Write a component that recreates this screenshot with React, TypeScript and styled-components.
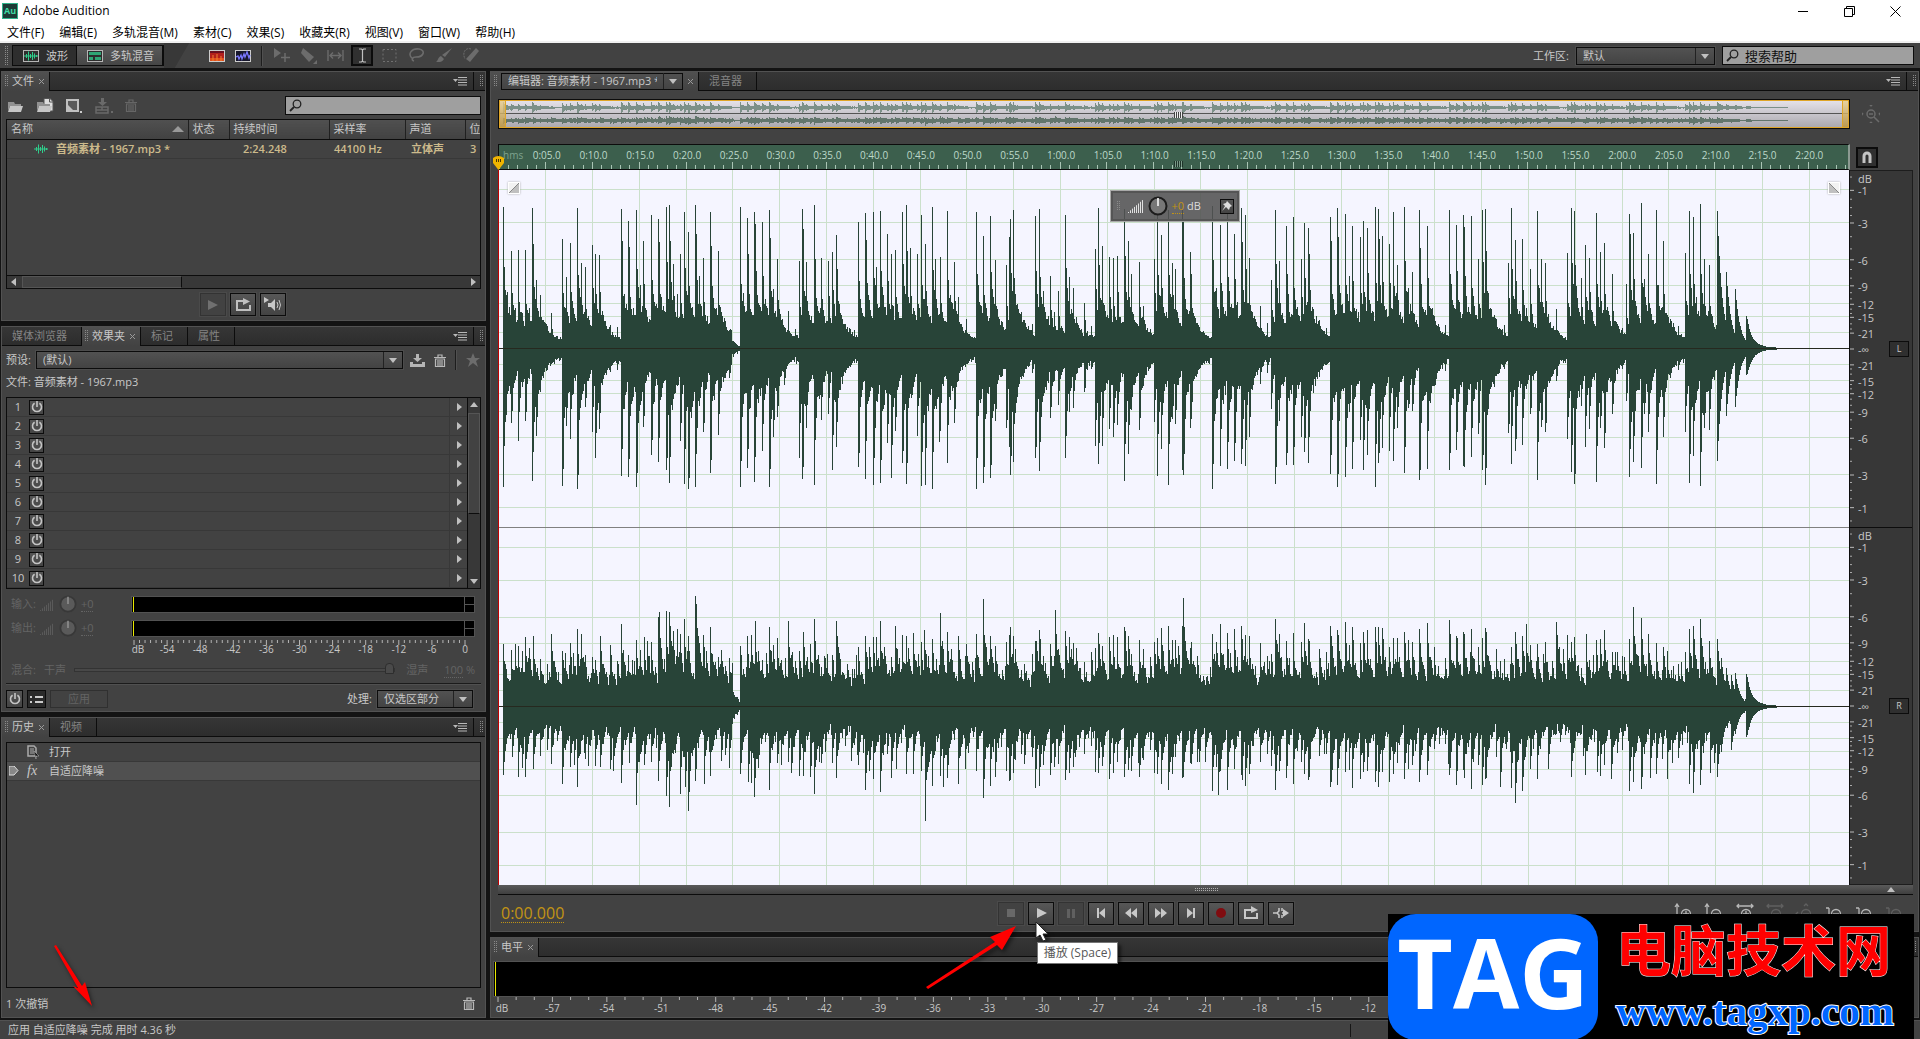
import React from "react";
import styled, { createGlobalStyle, css } from "styled-components";

const ui = '"Open Sans", "Noto Sans CJK SC", sans-serif';
const c = {
  panel: "#424242",
  edge: "#525252",
  gap: "#131313",
  line: "#0c0c0c",
  text: "#c8c8c8",
  dim: "#646464",
  tab: "#848484",
  amber: "#c29414",
  tan: "#ccba8c",
  wave: "#284438",
  canvas: "#f5f5ff",
  grid: "#cbe0cb",
};

const Global = createGlobalStyle`
  * { box-sizing: border-box; }
  html, body, #root { height: 100%; }
  body { margin: 0; background: ${c.gap}; overflow: hidden; }
  button, input, select { font: inherit; color: inherit; margin: 0; }
  svg { display: block; flex: none; }
`;

/* ---------- wave data ---------- */

type Survey = { origin: number; zero: number; unit: number; points: number[] };

const LEFT_UP: Survey[] = [
  { origin: -13, zero: 865, unit: 3, points: [52,443,64,697,76,573,88,745,97,570,118,572,130,745,139,446,142,552,151,662,163,705,172,780,196,760,229,538,241,652,253,549,274,445,286,610,298,622,319,556,328,583,340,586,373,797,394,802,406,447,409,543,427,484,430,562,451,451,463,675,472,543,496,465,505,727,517,478,520,547,541,441,550,437,553,543,562,612,574,702,583,583,595,457,607,518,628,435,631,522,640,650,652,594,673,457,676,560,697,573,715,775,763,442,784,474,787,583,805,458,808,492,829,486,850,450,853,535,862,687,874,599,907,753,928,807,940,603,949,448,952,508,961,608,985,436,1006,594,1027,605,1039,578,1051,527,1054,628,1105,812,1117,487,1138,460,1141,540,1162,457,1171,622,1183,453,1204,523,1216,583,1228,570,1249,458,1261,435,1264,574,1273,565,1294,583,1306,466,1318,553,1339,442,1348,598,1363,592,1384,453,1405,607,1417,712,1441,777,1471,457,1492,528,1513,470,1528,600] },
  { origin: 502, zero: 865, unit: 3, points: [16,617,26,531,28,478,37,452,43,702,70,795,94,793,103,468,106,657,115,448,118,652,127,693,148,648,160,757,172,693,193,465,196,626,205,652,217,684,226,773,250,729,271,798,283,568,292,444,304,559,325,592,337,595,349,588,370,447,373,590,382,543,391,643,415,608,427,738,448,808,460,597,469,465,481,525,502,450,514,610,526,628,547,452,550,480,571,577,574,643,592,790,637,438,649,684,661,497,682,457,703,523,724,445,727,548,736,467,748,595,781,738,802,790,814,662,826,451,838,603,859,500,880,471,904,597,913,489,925,506,928,583,958,780,979,805,991,471,994,543,1012,444,1015,532,1036,462,1048,650,1057,498,1081,531,1090,484,1102,505,1126,443,1135,447,1138,538,1147,528,1168,552,1180,457,1192,615,1213,441,1225,684,1237,638,1258,450,1261,565,1282,498,1303,770] },
  { origin: 942, zero: 1046, unit: 3, points: [16,978,28,632,31,825,49,676,52,816,70,646,73,684,94,650,115,778,127,632,136,630,139,755,169,960,193,977,205,790,214,626,226,723,247,720,260,925,271,808,292,634,304,779,316,792,349,930,382,762,394,626,403,634,424,837,436,736,448,775,469,640,481,757,493,732,516,823,547,985,559,855,568,643,571,705,580,700,604,612,613,840,625,764,649,632,670,725,715,980,736,762,748,635,760,654,781,615,793,778,808,798,832,636,835,810,859,817,886,870,919,950] },
];
const LEFT_DOWN: Survey[] = [
  { origin: -8, zero: 25, unit: 3, points: [37,440,61,247,82,301,103,242,124,422,136,286,148,155,214,435,226,256,238,295,259,446,283,198,304,275,313,353,325,265,358,93,379,88,391,406,412,409,436,440,457,260,481,343,502,365,526,389,535,428,568,302,580,430,592,446,613,440,637,273,658,397,682,284,715,112,748,440,769,383,790,423,814,332,835,440,847,290,859,230,880,134,925,351,934,414,946,262,970,432,991,237,1012,221,1024,388,1036,319,1102,378,1123,414,1147,433,1168,428,1189,308,1201,413,1213,272,1234,366,1246,430,1279,287,1291,435,1303,432,1324,446,1345,305,1369,367,1390,248,1456,445,1477,428] },
];
const RIGHT_UP: Survey[] = [
  { origin: -13, zero: 499, unit: 3, points: [52,313,76,330,88,312,97,318,109,333,118,291,130,325,142,288,163,357,184,373,196,283,208,382,229,335,253,309,262,340,274,268,286,282,298,346,319,352,328,360,342,288,361,397,373,315,394,365,406,254,418,375,427,346,439,360,451,301,463,330,475,292,484,305,496,306,508,382,517,233,520,217,541,214,550,217,553,260,562,275,574,268,583,282,595,238,607,290,628,168,631,194,640,310,652,286,661,335,673,262,697,352,706,330,718,380,730,354,739,370,763,320,775,435,784,288,796,285,808,243,817,335,829,360,841,340,850,263,874,294,886,360,907,243,919,338,928,363,940,333,952,276,973,312,985,237,997,346,1018,355,1039,346,1051,243,1054,290,1084,373,1105,387,1117,322,1138,288,1150,323,1162,291,1171,291,1183,243,1195,321,1216,351,1228,258,1240,354,1249,285,1261,289,1282,280,1297,343,1306,308,1315,270,1327,348,1339,297,1351,358,1363,219,1384,276,1396,327,1417,289,1441,313,1460,367,1471,282,1492,178] },
  { origin: 1002, zero: 601, unit: 3, points: [1,465,12,460,34,425,46,378,67,390,79,355,91,418,112,415,136,408,157,465,169,349,178,425,190,453,202,387,214,410,223,393,235,478,259,385,281,470,289,402,301,400,313,373,337,440,346,440,367,452,388,400,400,305,424,337,445,385,469,412,490,423,502,437,520,480,535,475,556,440,568,370,580,360,601,340,628,405,652,400,664,457,680,487,693,508,706,503,739,505] },
];
const RIGHT_DOWN: Survey[] = [
  { origin: -13, zero: 499, unit: 3, points: [52,702,78,648,97,708,118,710,142,685,163,637,196,670,229,731,253,680,274,740,298,655,328,677,343,680,373,685,406,728,430,667,451,794,475,674,496,664,517,720,541,767,550,800,583,761,598,740,607,811,628,720,655,731,673,707,706,660,730,683,763,700,787,725,796,728,805,768,817,683,850,747,874,668,886,674,907,664,916,698,940,705,952,705,973,710,985,760,1006,666,1039,668,1051,713,1117,672,1138,748,1150,692,1162,716,1183,754,1216,712,1231,684,1261,700,1282,700,1306,692,1318,842,1339,735,1363,707,1372,740,1384,712,1417,730,1438,685,1471,690,1492,772] },
  { origin: 1002, zero: 601, unit: 3, points: [1,840,34,845,46,888,67,852,112,816,145,787,214,810,256,805,292,797,301,807,313,775,334,818,388,853,400,825,424,848,450,815,469,803,502,816,535,755,568,832,580,860,601,835,631,798,652,810,664,737,693,730,706,683,739,690] },
];

const SPAN = 1351;
const HALF = 178;

const noise = (seed: number) => {
  let s = seed;
  return () => {
    s = (s * 1664525 + 1013904223) % 4294967296;
    return s / 4294967296;
  };
};

const peaksOf = (surveys: Survey[]) => {
  const out: [number, number][] = [];
  surveys.forEach((s) => {
    for (let i = 0; i < s.points.length; i += 2) {
      out.push([s.origin + Math.floor(s.points[i] / s.unit), Math.abs(s.points[i + 1] - s.zero) / s.unit]);
    }
  });
  return out;
};

type Shape = { floor: number; jitter: number; head: number[]; tail: number; reach: number; seed: number };

const envelope = (peaks: [number, number][], shape: Shape) => {
  const rnd = noise(shape.seed);
  const out: number[] = new Array(SPAN).fill(0);
  for (let x = 4; x < 1262; x++) {
    const fade = x < 1225 ? 1 : Math.max(0.25, 1 - (x - 1225) / 18);
    const dip = x > 230 && x < 241 ? (243 - x) / 16 : 1;
    out[x] = (shape.floor + rnd() * shape.jitter) * fade * dip;
  }
  peaks.forEach(([px, h]) => {
    for (let d = 0; d < 30; d++) {
      const x = px + d;
      if (x < 4 || x >= SPAN || (x > 232 && x < 241 && d > 0)) continue;
      let k = d < 4 ? shape.head[d] : shape.tail * Math.exp(-(d - 3) / shape.reach);
      if (d > 0) k *= 0.82 + rnd() * 0.34;
      if (px > 1215 && d > 0) k = Math.exp(-d / 5);
      out[x] = Math.max(out[x], h * k);
    }
  });
  return out.map((v, x) => {
    if (x <= 1248) return v;
    const d = x - 1248;
    return Math.min(v + 4 * Math.exp(-d / 14), 28 * Math.exp(-d / 4) + 8 * Math.exp(-d / 12));
  });
};

const leftUpPeaks = peaksOf(LEFT_UP);
const leftDownPeaks: [number, number][] = [
  ...peaksOf(LEFT_DOWN),
  ...leftUpPeaks.filter(([x]) => x > 487).map(([x, h], i): [number, number] => [x, h * [0.98, 0.82, 0.95, 0.88][i % 4]]),
];
const fillNoise = noise(77);
const middle = (gain: number) =>
  leftUpPeaks
    .filter(([x]) => x > 487 && x < 1000)
    .map(([x, h]): [number, number] => [x, (34 + h * 0.26 + fillNoise() * 22) * gain]);
const ripple = (low: number, high: number) => {
  const out: [number, number][] = [];
  for (let x = 6; x < 1225; x += 3 + Math.floor(fillNoise() * 4)) {
    if (x < 230 || x > 241) out.push([x, low + fillNoise() * fillNoise() * (high - low)]);
  }
  return out;
};
const rightUpPeaks: [number, number][] = [...peaksOf(RIGHT_UP), ...middle(0.95), ...ripple(30, 62), [685, 108], [556, 96]];
const rightDownPeaks: [number, number][] = [...peaksOf(RIGHT_DOWN), ...middle(0.92), ...ripple(28, 66), [720, 88]];

const bars = (up: number[], down: number[], mid: number, gain: number) =>
  up
    .map((u, x) => (u + down[x] > 0.4 ? `M${x} ${(mid - u * gain).toFixed(1)}h1V${(mid + 1 + down[x] * gain).toFixed(1)}h-1z` : ""))
    .join("");

const leftUp = envelope(leftUpPeaks, { floor: 7, jitter: 6, head: [1, 0.54, 0.4, 0.35], tail: 0.33, reach: 14, seed: 11 });
const leftDown = envelope(leftDownPeaks, { floor: 8, jitter: 7, head: [1, 0.8, 0.5, 0.43], tail: 0.4, reach: 12, seed: 23 });
const rightUp = envelope(rightUpPeaks, { floor: 18, jitter: 12, head: [1, 0.74, 0.62, 0.56], tail: 0.52, reach: 12, seed: 37 });
const rightDown = envelope(rightDownPeaks, { floor: 16, jitter: 12, head: [1, 0.74, 0.58, 0.52], tail: 0.48, reach: 11, seed: 51 });

/* ---------- shell ---------- */

const Shell = styled.div`
  height: 100vh;
  display: flex;
  flex-direction: column;
  font: 11px/16px ${ui};
  color: ${c.text};
  background: ${c.gap};
  user-select: none;
`;
const TitleBar = styled.header`
  height: 22px;
  background: #fff;
  color: #000;
  font-size: 12px;
  display: flex;
  align-items: center;
  gap: 5px;
  padding-left: 2px;
`;
const AppBadge = styled.span`
  width: 16px;
  height: 16px;
  background: #1d3b36;
  border: 1px solid #2fb38b;
  color: #3fd9a4;
  font: bold 9px/13px ${ui};
  text-align: center;
`;
const Caption = styled.div`
  margin-left: auto;
  display: flex;
  padding-right: 2px;
`;
const CaptionButton = styled.button`
  width: 46px;
  height: 22px;
  padding: 0;
  border: 0;
  background: none;
  display: grid;
  place-items: center;
`;
const Menu = styled.nav`
  height: 21px;
  background: #fff;
  border-bottom: 2px solid #f0f0f0;
  color: #000;
  font-size: 12px;
  display: flex;
  gap: 15px;
  padding: 2px 0 0 7px;
  align-items: center;
`;
const MenuItem = styled.button`
  padding: 0;
  border: 0;
  background: none;
  line-height: 18px;
`;
const Toolbar = styled.div`
  height: 25px;
  margin-bottom: 3px;
  background: ${c.panel};
  display: flex;
  align-items: center;
  padding: 0 6px 0 4px;
`;
const Spacer = styled.span`
  flex: 1;
`;
const Grip = styled.span<{ $h: number }>`
  width: 4px;
  height: ${(p) => p.$h}px;
  flex: none;
  background: conic-gradient(#8a8a8a 25%, transparent 0) 0 0 / 2px 2px;
`;
const ModeGroup = styled.div`
  display: flex;
  margin-left: 4px;
  border: 1px solid ${c.line};
`;
const ModeButton = styled.button<{ $on?: boolean }>`
  height: 19px;
  padding: 0 8px 0 10px;
  border: 0;
  border-right: 1px solid ${c.line};
  display: flex;
  align-items: center;
  gap: 7px;
  background: ${(p) => (p.$on ? "#2e2e2e" : "linear-gradient(#5a5a5a, #464646)")};
`;
const Swoosh = styled.span`
  width: 35px;
  height: 25px;
  background: linear-gradient(120deg, #383838 50%, ${c.panel} 52%);
`;
const IconRow = styled.div<{ $gap: number }>`
  display: flex;
  align-items: center;
  gap: ${(p) => p.$gap}px;
`;
const VRule = styled.span`
  width: 2px;
  height: 20px;
  background: #1d1d1d;
  border-right: 1px solid #505050;
`;
const BareButton = styled.button<{ $pressed?: boolean }>`
  width: 22px;
  height: 21px;
  padding: 0;
  flex: none;
  display: grid;
  place-items: center;
  border: ${(p) => (p.$pressed ? `2px solid ${c.line}` : "0")};
  background: ${(p) => (p.$pressed ? "#303030" : "none")};
`;
const SelectBox = styled.span<{ $grow?: boolean }>`
  display: flex;
  height: 18px;
  flex: ${(p) => (p.$grow ? 1 : "none")};
  align-items: center;
  border: 1px solid ${c.line};
  outline: 1px solid #4c4c4c;
  background: linear-gradient(#525252, #434343);
  padding-right: 5px;
  gap: 5px;
`;
const Select = styled.select<{ $w?: number }>`
  appearance: none;
  border: 0;
  outline: 0;
  background: none;
  height: 16px;
  padding: 0 6px;
  line-height: 16px;
  flex: 1;
  border-right: 1px solid #222;
  width: ${(p) => (p.$w ? `${p.$w}px` : "auto")};
`;
const SearchBox = styled.label<{ $w: number; $big?: boolean }>`
  width: ${(p) => p.$w}px;
  height: 19px;
  display: flex;
  align-items: center;
  gap: 6px;
  padding-left: 3px;
  border: 1px solid ${c.line};
  background: #9f9f9f;
  color: #1c1c1c;
  font-size: ${(p) => (p.$big ? 13 : 11)}px;
`;
const SearchInput = styled.input`
  flex: 1;
  min-width: 0;
  height: 17px;
  padding: 0;
  border: 0;
  outline: 0;
  background: none;
  &::placeholder { color: #111; opacity: 1; }
`;

/* ---------- panels ---------- */

const Workspace = styled.main`
  flex: 1;
  min-height: 0;
  display: flex;
  gap: 4px;
  padding: 0 1px;
`;
const Column = styled.div<{ $w?: number }>`
  display: flex;
  flex-direction: column;
  gap: 5px;
  min-width: 0;
  ${(p) => (p.$w ? css`width: ${p.$w}px; flex: none;` : css`flex: 1;`)}
`;
const PanelBox = styled.section<{ $h?: number }>`
  ${(p) => (p.$h ? css`height: ${p.$h}px; flex: none;` : css`flex: 1; min-height: 0;`)}
  display: flex;
  flex-direction: column;
  background: ${c.panel};
  border: 1px solid ${c.edge};
`;
const Tabs = styled.div`
  height: 19px;
  flex: none;
  display: flex;
  background: linear-gradient(#363636, #2c2c2c);
`;
const Tab = styled.div<{ $on?: boolean }>`
  height: 19px;
  display: flex;
  align-items: center;
  gap: 4px;
  padding: ${(p) => (p.$on ? "0 4px 1px 2px" : "0 14px 1px 10px")};
  color: ${(p) => (p.$on ? c.text : c.tab)};
  background: ${(p) => (p.$on ? "linear-gradient(#505050, #424242)" : "none")};
  border-right: 1px solid ${c.line};
  border-bottom: ${(p) => (p.$on ? "0" : `1px solid ${c.line}`)};
`;
const TabFill = styled.div`
  flex: 1;
  display: flex;
  align-items: center;
  justify-content: flex-end;
  gap: 5px;
  padding-right: 2px;
  border-bottom: 1px solid ${c.line};
`;
const TabRule = styled.span`
  width: 1px;
  height: 18px;
  background: ${c.line};
`;
const Body = styled.div`
  flex: 1;
  min-height: 0;
  display: flex;
  flex-direction: column;
  padding: 5px 4px 0;
`;
const Row = styled.div<{ $h: number; $gap?: number; $pad?: string; $dim?: boolean }>`
  height: ${(p) => p.$h}px;
  flex: none;
  display: flex;
  align-items: center;
  gap: ${(p) => p.$gap || 0}px;
  padding: ${(p) => p.$pad || 0};
  color: ${(p) => (p.$dim ? c.dim : "inherit")};
`;
const ListFrame = styled.div<{ $h?: number }>`
  ${(p) => (p.$h ? css`height: ${p.$h}px; flex: none;` : css`flex: 1; min-height: 0;`)}
  display: flex;
  flex-direction: column;
  border: 1px solid ${c.line};
  overflow: hidden;
`;
const FileTable = styled.table`
  width: 100%;
  table-layout: fixed;
  border-collapse: collapse;
  th, td {
    height: 19px;
    padding: 0 4px;
    text-align: left;
    white-space: nowrap;
    overflow: hidden;
    line-height: 18px;
  }
  th:last-child, td:last-child { padding-right: 0; border-right: 0; }
  th {
    font-weight: 400;
    background: linear-gradient(#505050, #424242);
    border-bottom: 1px solid ${c.line};
    border-right: 1px solid #202020;
  }
  td {
    color: ${c.tan};
    font-weight: 600;
    border-bottom: 1px solid #383838;
  }
`;
const Col = styled.col<{ $w?: number }>`
  width: ${(p) => (p.$w ? `${p.$w}px` : "auto")};
`;
const Between = styled.span<{ $pad?: number }>`
  display: flex;
  align-items: center;
  justify-content: ${(p) => (p.$pad ? "flex-start" : "space-between")};
  gap: 7px;
  padding-left: ${(p) => p.$pad || 0}px;
`;
const HScroll = styled.div`
  margin-top: auto;
  height: 13px;
  display: flex;
  align-items: center;
  justify-content: space-between;
  border-top: 1px solid ${c.line};
  background: #383838;
  padding: 0 3px;
`;
const HThumb = styled.span`
  width: 160px;
  height: 12px;
  margin-left: 4px;
  margin-right: auto;
  background: ${c.panel};
  border: 1px solid #555;
  border-right-color: ${c.line};
`;
const PushButton = styled.button<{ $off?: boolean }>`
  width: 26px;
  height: 23px;
  padding: 0;
  flex: none;
  display: grid;
  place-items: center;
  border: 1px solid ${(p) => (p.$off ? "#333" : c.line)};
  outline: 1px solid #4a4a4a;
  background: ${(p) => (p.$off ? "none" : "linear-gradient(#575757, #434343)")};
`;
const Rack = styled.div`
  display: flex;
  height: 192px;
  flex: none;
  border: 1px solid ${c.line};
`;
const Slots = styled.ol`
  flex: 1;
  margin: 0;
  padding: 0;
  list-style: none;
`;
const Slot = styled.li`
  height: 19px;
  display: flex;
  align-items: center;
  border-bottom: 1px solid #383838;
`;
const SlotNumber = styled.span`
  width: 22px;
  text-align: center;
`;
const SmallSquare = styled.button<{ $w: number; $pressed?: boolean }>`
  width: ${(p) => p.$w}px;
  height: ${(p) => (p.$w > 15 ? 18 : 15)}px;
  padding: 0;
  flex: none;
  display: grid;
  place-items: center;
  border: 1px solid ${c.line};
  background: ${(p) => (p.$pressed ? "#2a2a2a" : "linear-gradient(#555, #444)")};
`;
const SlotArrow = styled.button`
  width: 18px;
  height: 18px;
  margin-left: auto;
  padding: 0;
  border: 0;
  border-left: 1px solid #383838;
  background: none;
  display: grid;
  place-items: center;
`;
const VScroll = styled.div`
  width: 13px;
  display: flex;
  flex-direction: column;
  align-items: center;
  border-left: 1px solid ${c.line};
  background: #383838;
  padding: 3px 0;
`;
const VThumb = styled.span`
  width: 12px;
  height: 101px;
  margin-top: 4px;
  margin-bottom: auto;
  background: ${c.panel};
  border: 1px solid #555;
  border-bottom-color: ${c.line};
`;
const GainLabel = styled.span`
  width: 120px;
  display: flex;
  align-items: center;
  gap: 4px;
`;
const Dotted = styled.span`
  border-bottom: 1px dotted currentColor;
  line-height: 14px;
`;
const MeterBar = styled.div<{ $h: number }>`
  flex: 1;
  height: ${(p) => p.$h}px;
  display: flex;
  align-items: stretch;
  justify-content: space-between;
  background: #000;
  border: 1px solid ${c.edge};
  padding-left: 1px;
`;
const MeterPeak = styled.span`
  width: 1px;
  background: #e8e800;
`;
const ClipBoxes = styled.span`
  width: 10px;
  border-left: 1px solid #555;
  background: linear-gradient(#000 47%, #555 47% 53%, #000 53%);
`;
const ScaleSvg = styled.svg<{ $h: number; $inset: number }>`
  width: calc(100% - ${(p) => p.$inset}px);
  height: ${(p) => p.$h}px;
  overflow: visible;
  font: 10px ${ui};
`;
const Range = styled.input`
  flex: 1;
  min-width: 0;
  height: 12px;
  margin-right: 3px;
  appearance: none;
  background: none;
  &::-webkit-slider-runnable-track {
    height: 4px;
    border: 1px solid #333;
    background: #484848;
  }
  &::-webkit-slider-thumb {
    appearance: none;
    width: 9px;
    height: 11px;
    margin-top: -6px;
    background: #4a4a4a;
    border: 1px solid #2e2e2e;
    border-radius: 4px 4px 0 0;
  }
`;
const Percent = styled.span`
  margin-left: 8px;
`;
const HRule = styled.hr`
  width: 100%;
  margin: 0;
  border: 0;
  border-top: 1px solid #1b1b1b;
  border-bottom: 1px solid #505050;
`;
const ApplyButton = styled.button`
  width: 58px;
  height: 18px;
  padding: 0;
  border: 1px solid #303030;
  background: none;
  color: ${c.dim};
`;
const HistoryItem = styled.button<{ $on?: boolean }>`
  height: 19px;
  width: 100%;
  flex: none;
  display: grid;
  grid-template-columns: 18px 22px 1fr;
  align-items: center;
  padding: 0 2px;
  text-align: left;
  border: 0;
  border-bottom: 1px solid #383838;
  background: ${(p) => (p.$on ? "#505050" : "none")};
`;
const Fx = styled.i`
  font: italic 14px/16px "Liberation Serif", serif;
`;

/* ---------- editor ---------- */

const EditorGrid = styled.div`
  flex: 1;
  min-height: 0;
  display: grid;
  grid-template-columns: minmax(0, 1fr) 63px;
  grid-template-rows: 30px 15px 26px minmax(0, 1fr) 10px;
  padding: 8px 5px 0 7px;
`;
const Overview = styled.div`
  grid-row: 1;
  display: flex;
  border: 1px solid ${c.line};
  background: linear-gradient(#e6e3ea, #a9a7ad);
  position: relative;
  svg { width: 100%; height: 100%; }
  &::after {
    content: "";
    position: absolute;
    inset: 0;
    border: 1px solid #dfa527;
  }
`;
const Handle = styled.span<{ $right?: boolean }>`
  position: absolute;
  top: 0;
  bottom: 0;
  ${(p) => (p.$right ? "right: 0;" : "left: 0;")}
  width: 7px;
  border: 1px solid #dfa527;
  background: linear-gradient(rgba(232, 205, 140, 0.8), rgba(192, 150, 60, 0.8));
`;
const SideCell = styled.div<{ $row: number }>`
  grid-row: ${(p) => p.$row};
  grid-column: 2;
  display: flex;
  align-items: center;
  padding-left: ${(p) => (p.$row === 1 ? 12 : 6)}px;
`;
const TimeRuler = styled.div`
  grid-row: 3;
  border: 1px solid ${c.line};
  border-right: 2px solid #8c9a92;
  background: #3c5f4d;
  position: relative;
`;
const RulerSvg = styled.svg`
  width: 100%;
  height: 24px;
  overflow: hidden;
  font: 10px ${ui};
`;
const Playhead = styled.svg`
  position: absolute;
  left: -6px;
  top: 11px;
`;
const RulerKnob = styled.span`
  position: absolute;
  left: 50%;
  bottom: 2px;
  width: 9px;
  height: 6px;
  background: repeating-linear-gradient(90deg, #1f332a 0 1px, #7a9a88 1px 2px);
`;
const OverviewKnob = styled(RulerKnob)`
  bottom: 10px;
  background: repeating-linear-gradient(90deg, #444 0 1px, #eee 1px 2px);
`;
const Canvas = styled.div`
  grid-row: 4;
  display: flex;
  flex-direction: column;
  background: ${c.canvas};
  border-left: 1px solid #c00000;
  border-right: 1px solid ${c.line};
  position: relative;
`;
const Channel = styled.div`
  flex: 1;
  min-height: 0;
  display: grid;
  & + & { border-top: 1px solid #808080; }
  > svg { grid-area: 1 / 1; width: 100%; height: 100%; }
`;
const Fade = styled.span<{ $right?: boolean }>`
  position: absolute;
  top: 12px;
  ${(p) => (p.$right ? "right: 9px;" : "left: 9px;")}
  width: 12px;
  height: 12px;
  border: 1px solid #fff;
  box-shadow: 0 0 2px #aaa;
  background: linear-gradient(${(p) => (p.$right ? "45deg" : "315deg")}, #c0c0c0 46%, #888 47% 52%, #f2f2f2 54%);
`;
const Hud = styled.div`
  position: absolute;
  left: 45%;
  top: 21px;
  margin-left: 4px;
  width: 128px;
  height: 30px;
  display: flex;
  align-items: center;
  gap: 4px;
  padding: 0 3px 0 3px;
  border: 2px solid #555;
  outline: 1px solid #aaa;
  background: rgba(82, 82, 82, 0.88);
  color: #dcdcdc;
  font-size: 11px;
`;
const Amber = styled.span`
  color: ${c.amber};
  border-bottom: 1px dotted ${c.amber};
  line-height: 13px;
`;
const LevelScale = styled.div`
  grid-row: 4;
  grid-column: 2;
  display: flex;
  flex-direction: column;
  background: #373737;
  border: 1px solid #1d1d1d;
  border-left: 0;
`;
const LevelHalf = styled.div`
  flex: 1;
  min-height: 0;
  display: flex;
  align-items: center;
  & + & { border-top: 1px solid ${c.line}; }
  svg { flex: 1; width: 40px; height: 100%; font: 11px ${ui}; }
`;
const ChannelButton = styled.button`
  width: 20px;
  height: 16px;
  padding: 0;
  margin-right: 3px;
  border: 1px solid ${c.line};
  background: #2f2f2f;
  font-size: 9px;
  line-height: 14px;
`;
const Splitter = styled.div`
  grid-row: 5;
  grid-column: 1 / 3;
  display: grid;
  grid-template-columns: 1fr auto 1fr;
  align-items: center;
  background: linear-gradient(#5a5a5a, #3f3f3f);
  border-bottom: 1px solid ${c.line};
`;
const DotStrip = styled.span`
  width: 24px;
  height: 4px;
  background: conic-gradient(#b0b0b0 25%, transparent 0) 0 0 / 2px 2px;
`;
const EndMark = styled.span`
  justify-self: end;
  padding-right: 18px;
`;
const TransportRow = styled.div`
  height: 36px;
  flex: none;
  display: grid;
  grid-template-columns: 17fr auto 21fr;
  align-items: center;
  padding: 0 7px;
`;
const Clock = styled.span`
  justify-self: start;
  margin-left: 3px;
  color: ${c.amber};
  font-size: 16px;
  line-height: 18px;
  border-bottom: 1px dotted ${c.amber};
`;
const Transport = styled.div`
  position: relative;
  display: flex;
  gap: 4px;
`;
const ZoomTools = styled.div`
  justify-self: end;
  display: flex;
  gap: 10px;
  padding-right: 7px;
`;
const Tooltip = styled.span`
  position: absolute;
  z-index: 3;
  left: 39px;
  top: 40px;
  height: 22px;
  padding: 0 6px;
  border: 1px solid #767676;
  background: #fff;
  color: #575757;
  font-size: 12px;
  line-height: 20px;
  white-space: nowrap;
  box-shadow: 3px 3px 3px rgba(0, 0, 0, 0.5);
`;
const Overlay = styled.svg<{ $left: number; $top?: number; $bottom?: number }>`
  position: absolute;
  z-index: 2;
  left: ${(p) => p.$left}px;
  ${(p) => (p.$top !== undefined ? `top: ${p.$top}px;` : `bottom: ${p.$bottom}px;`)}
  pointer-events: none;
  overflow: visible;
  filter: drop-shadow(2px 3px 2px rgba(0, 0, 0, 0.5));
`;
const EditorSelect = styled.div`
  display: flex;
  align-items: center;
  height: 17px;
  padding-right: 5px;
  gap: 5px;
  border: 1px solid ${c.line};
  background: linear-gradient(#505050, #444);
`;
const LevelBody = styled.div`
  padding: 4px 5px 0 2px;
`;
const StatusBar = styled.footer`
  height: 19px;
  margin-top: 2px;
  flex: none;
  display: flex;
  align-items: center;
  padding-left: 8px;
  background: ${c.panel};
  border-top: 1px solid ${c.edge};
`;
const StatusRule = styled.span`
  margin-left: auto;
  margin-right: 569px;
  width: 1px;
  height: 13px;
  background: #161616;
`;
const Watermark = styled.aside`
  position: absolute;
  z-index: 5;
  right: 6px;
  bottom: 0;
  width: 526px;
  height: 125px;
  display: flex;
  background: #000;
  overflow: hidden;
`;
const Tag = styled.div`
  width: 210px;
  height: 126px;
  flex: none;
  border-radius: 28px;
  background: #0066ff;
  color: #fff;
  font: 700 96px/116px "Open Sans", sans-serif;
  text-align: center;
  white-space: nowrap;
`;
const MarkText = styled.div`
  flex: 1;
  padding-left: 18px;
  white-space: nowrap;
`;
const MarkName = styled.div`
  font: 700 55px/66px "Noto Sans CJK SC", sans-serif;
  color: #f00;
  -webkit-text-stroke: 1px #fff;
  paint-order: stroke fill;
`;
const MarkUrl = styled.div`
  font: 700 41px/62px "Liberation Serif", serif;
  color: #0066ff;
  -webkit-text-stroke: 2px #fff;
  paint-order: stroke fill;
`;

/* ---------- icons ---------- */

const G = ({ w = 16, h = 16, children }: { w?: number; h?: number; children: React.ReactNode }) => (
  <svg width={w} height={h} viewBox={`0 0 ${w} ${h}`} fill="none" stroke="none" aria-hidden="true">{children}</svg>
);
const Tri = ({ dir, color = "#c0c0c0" }: { dir: "up" | "down" | "left" | "right"; color?: string }) => {
  const d = { up: "M0 6 4 1 8 6z", down: "M0 2H8L4 7z", left: "M6 0V8L1 4z", right: "M2 0 7 4 2 8z" }[dir];
  return <G w={8} h={8}><path d={d} fill={color} /></G>;
};
const PanelMenu = () => (
  <G w={15} h={10}><path d="M0 3h5L2.500 6z" fill="#b8b8b8" /><path d="M5 1.500h9M5 4h9M5 6.500h9M5 9h9" stroke="#b8b8b8" /></G>
);
const Close = () => <G w={7} h={7}><path d="M1 1l5 5M6 1 1 6" stroke="#9a9a9a" /></G>;
const Lens = ({ s = 13 }: { s?: number }) => (
  <svg width={s} height={s} viewBox="0 0 13 13" fill="none" stroke="#222"><circle cx="8" cy="5" r="3.800" strokeWidth="1.300" /><path d="M5 8 1 12" strokeWidth="1.800" /></svg>
);
const MiniWave = ({ framed }: { framed?: boolean }) => (
  <G w={16} h={12}>
    {framed && <rect x=".5" y=".5" width="15" height="11" stroke="#b5b5b5" />}
    <path d="M1 6h14M3.500 4v4M5.500 1.500v9M7.500 4v4M9.500 2v8M11.500 3.500v5M13.500 5v2" stroke="#2fce8c" />
  </G>
);
const MultiIcon = () => (
  <G w={16} h={12}><rect x=".5" y=".5" width="15" height="11" stroke="#b5b5b5" fill="#2d2d2d" /><path d="M2 2h12v3H2zM2 7h4v3H2zM8 7h6v3H8z" fill="#2fa574" /></G>
);
const Power = () => <G w={12} h={12}><path d="M3.600 2.200a4.500 4.500 0 1 0 4.800 0M6 0v6" stroke="#c4c4c4" strokeWidth="1.600" /></G>;
const Trash = ({ off }: { off?: boolean }) => (
  <G w={12} h={13}><path d="M0 3.500h12M4 3V1h4v2M1.500 5.500v7h9v-7M4 6v6M6 6v6M8 6v6M1 5h10" stroke={off ? "#666" : "#b8b8b8"} strokeWidth="1.200" /></G>
);
const Folder = ({ page }: { page?: boolean }) => (
  <G w={18} h={16}>
    {page && <path d="M8 .5h6l3 3V13H8z" fill="#ddd" stroke="#555" />}
    {page && <path d="M13.500 1v3H17" stroke="#555" />}
    <path d="M1 4h6l1 2h6v2H3L1 13z" fill="#929292" /><path d="M3 8h13l-2 6H1z" fill="#c6c6c6" />
  </G>
);
const NewFile = () => <G w={18} h={16}><rect x="2" y="2" width="11" height="11" stroke="#c0c0c0" strokeWidth="2" fill="#5a5a5a" /><path d="M3 7l6 6H3z" fill="#c0c0c0" /><path d="M15 13h2v2h-2z" fill="#ccc" /></G>;
const Insert = () => <G w={20} h={16}><path d="M2 9h12v6H2zM2 12h12M8 9v3" stroke="#6a6a6a" strokeWidth="1.500" /><path d="M7 0h3v4h3L8.500 8 4 4h3z" fill="#6a6a6a" /><path d="M17 13h2v2h-2z" fill="#6a6a6a" /></G>;
const Save = () => <G w={15} h={13}><path d="M0 8h3v2h9V8h3v5H0z" fill="#b5b5b5" /><path d="M6 0h3v4h3L7.500 8 3 4h3z" fill="#b5b5b5" /></G>;
const LoopIcon = () => <G w={17} h={13}><path d="M10 3H2v9h13V7" stroke="#c0c0c0" strokeWidth="2" /><path d="M8 0l7 3.500L8 7z" fill="#c0c0c0" /></G>;
const Speaker = () => <G w={18} h={15}><path d="M0 0l5 3-5 3zM4 6h3l4-4v12l-4-4H4z" fill="#c8c8c8" /><path d="M13 5q2 3 0 6M15 3q3 5 0 10" stroke="#c8c8c8" /></G>;
const Bars = ({ color, w = 15 }: { color: string; w?: number }) => (
  <G w={w} h={14}>{Array.from({ length: Math.floor(w / 2) }, (_, i) => <rect key={i} x={i * 2} y={13 - i * 1.7} width="1" height={i * 1.7 + 1} fill={color} />)}</G>
);
const Knob = ({ s, off }: { s: number; off?: boolean }) => (
  <svg width={s} height={s} viewBox="0 0 20 20"><circle cx="10" cy="10" r="8.500" fill={off ? "#5a5a5a" : "#777"} stroke={off ? "#383838" : "#1c1c1c"} strokeWidth="2" /><path d="M10 2v8" stroke={off ? "#999" : "#fff"} strokeWidth="1.500" /></svg>
);
const gray = "#c8c8c8";
const transportIcons: { name: string; off?: boolean; art: React.ReactNode }[] = [
  { name: "停止", off: true, art: <path d="M4 4h8v8H4z" fill="#686868" /> },
  { name: "播放", art: <path d="M4 3l10 5-10 5z" fill={gray} /> },
  { name: "暂停", off: true, art: <path d="M4 4h3v9H4zM9 4h3v9H9z" fill="#606060" /> },
  { name: "移到开头", art: <path d="M4 3h2v10H4zM12 3v10L6 8z" fill={gray} /> },
  { name: "快退", art: <path d="M8 3v10L2 8zM14 3v10L8 8z" fill={gray} /> },
  { name: "快进", art: <path d="M2 3v10l6-5zM8 3v10l6-5z" fill={gray} /> },
  { name: "移到结尾", art: <path d="M10 3h2v10h-2zM4 3v10l6-5z" fill={gray} /> },
  { name: "录制", art: <circle cx="8" cy="8" r="5" fill="#800c10" /> },
  { name: "循环播放", art: <><path d="M9 5H2v8h12V8" stroke={gray} strokeWidth="2" /><path d="M8 1l7 4-7 3z" fill={gray} /></> },
  { name: "跳过选区", art: <><path d="M0 8h4M6 3v3L4 8l2 2v3M9 3v3M9 10v3M9 8h2" stroke={gray} strokeWidth="1.500" /><path d="M10 4l6 4-6 4z" fill={gray} /></> },
];
const toolIcons: { name: string; on?: boolean; art: React.ReactNode }[] = [
  { name: "移动", art: <><path d="M1 1l7 5-7 5z" fill="#6c6c6c" /><path d="M12 6v9M8 10.500h9" stroke="#6c6c6c" strokeWidth="1.500" /></> },
  { name: "切断", art: <><path d="M3 1l11 9-5 5-8-9z" fill="#6c6c6c" /><path d="M17 13v4h-4z" fill="#6c6c6c" /></> },
  { name: "滑动", art: <path d="M1 3v11M16 3v11M3 8.500h11M6 5.500l-3 3 3 3M11 5.500l3 3-3 3" stroke="#6c6c6c" strokeWidth="1.400" /> },
  { name: "时间选区", on: true, art: <path d="M5 2h2.500l1 1 1-1H12M8.500 3v11M5 15h2.500l1-1 1 1H12" stroke="#c0c0c0" strokeWidth="1.200" /> },
  { name: "框选", art: <rect x="2" y="2.500" width="13" height="12" stroke="#707070" strokeDasharray="2 2" /> },
  { name: "套索", art: <path d="M4 11C-1 7 4 1 11 2s5 8-3 8c-4 0-5 3-2 4" stroke="#6c6c6c" strokeWidth="1.600" /> },
  { name: "画笔", art: <path d="M17 1l-7 9-3-2zM6 9l3 3c-2 4-6 3-8 3 2-1 2-5 5-6z" fill="#6c6c6c" /> },
  { name: "修复", art: <><path d="M14 1l3 3-9 11-4-3z" fill="#6c6c6c" /><path d="M9 2C3 0 0 6 3 12" stroke="#6c6c6c" strokeDasharray="2 1" /></> },
];
const zoomIcons: { name: string; sign: string; off?: boolean; lead: string }[] = [
  { name: "放大振幅", sign: "M9 11h6M12 8v6", lead: "M3 2v14M1 4l2-3 2 3" },
  { name: "缩小振幅", sign: "M9 11h6", lead: "M3 2v14M1 4l2-3 2 3" },
  { name: "放大时间", sign: "M9 11h6M12 8v6", lead: "M3 3h16M5 1L3 3l2 2M17 1l2 2-2 2" },
  { name: "缩小时间", sign: "M9 11h6", off: true, lead: "M3 3h16M5 1L3 3l2 2M17 1l2 2-2 2" },
  { name: "全部缩小", sign: "M9 11h6", off: true, lead: "M10 3l2-2 2 2M4 13l-2-2 2-2" },
  { name: "放大入点", sign: "M9 11h6", lead: "M5 5v12M2 5h3" },
  { name: "放大出点", sign: "M9 11h6", lead: "M5 5v12M2 5h3" },
  { name: "缩放选区", sign: "M9 11h6", off: true, lead: "M5 5v12M2 5h3" },
];
const RedArrow = ({ flip }: { flip?: boolean }) =>
  flip ? (
    <path d="M1 61 70 16 65 11 91 0 77 24 72 19 3 63z" fill="#f00" />
  ) : (
    <path d="M0 1 24 43 19 41 38 61 31 37 28 41 2 0z" fill="#f00" />
  );

/* ---------- pieces ---------- */

const Panel = ({ h, tabs, active, lead, children }: { h?: number; tabs: string[]; active: number; lead?: React.ReactNode; children: React.ReactNode }) => (
  <PanelBox $h={h}>
    <Tabs>
      {tabs.map((t, i) => (
        <Tab key={t} $on={i === active}>
          {i === active && <Grip $h={12} />}
          {i === active && lead ? lead : t}
          {i === active && <Close />}
        </Tab>
      ))}
      <TabFill><PanelMenu /><TabRule /><Grip $h={12} /></TabFill>
    </Tabs>
    {children}
  </PanelBox>
);

const Dropdown = ({ label, value, width, grow }: { label: string; value: string; width?: number; grow?: boolean }) => (
  <SelectBox $grow={grow}>
    <Select aria-label={label} $w={width} defaultValue={value}><option>{value}</option></Select>
    <Tri dir="down" />
  </SelectBox>
);

const DbScale = ({ from, to, step, minor, span, inset = 0, h }: { from: number; to: number; step: number; minor: number; span: number; inset?: number; h: number }) => {
  const marks = [];
  for (let v = from; v <= to; v += minor) {
    const major = (v - from) % step === 0;
    const x = `${((v - from) / span) * 100}%`;
    marks.push(<line key={v} x1={x} x2={x} y1="0" y2={major ? 5 : 3} stroke="#b5b5b5" />);
    if (major) marks.push(<text key={`t${v}`} x={x} dx={v === from ? 4 : 0} y={h - 4} textAnchor="middle" fill={c.text}>{v === from ? "dB" : v}</text>);
  }
  return <ScaleSvg $h={h} $inset={inset}>{marks}</ScaleSvg>;
};

const DB = [-1, -3, -6, -9, -12, -15, -21];
const minorDb = [-0.3, -1.5, -2, -2.5, -4, -5, -7, -8, -10, -11, -13, -14, -17, -19];
const pct = (db: number, side: number) => `${50 - side * 50 * Math.pow(10, db / 20)}%`;
const times = Array.from({ length: 28 }, (_, i) => (i + 1) * 5);
const timeX = (t: number) => `${(t / 144.248) * 100}%`;
const stamp = (t: number) => `${Math.floor(t / 60)}:${String(t % 60).padStart(2, "0")}.0`;

const WaveChannel = ({ up, down }: { up: number[]; down: number[] }) => (
  <Channel>
    <svg shapeRendering="crispEdges">
      {times.map((t) => <line key={t} x1={timeX(t)} x2={timeX(t)} y1="0" y2="100%" stroke={c.grid} />)}
      {[1, -1].map((s) => DB.map((d) => <line key={`${s}${d}`} x1="0" x2="100%" y1={pct(d, s)} y2={pct(d, s)} stroke={c.grid} />))}
    </svg>
    <svg viewBox={`0 0 ${SPAN} ${HALF * 2 + 1}`} preserveAspectRatio="none" shapeRendering="crispEdges">
      <path d={bars(up, down, HALF, 1)} fill={c.wave} />
      <path d={`M0 ${HALF}h${SPAN}v1H0z`} fill="#26291f" />
    </svg>
  </Channel>
);

const LevelRuler = ({ name }: { name: string }) => (
  <LevelHalf>
    <svg>
      {[1, -1].map((s) => (
        <g key={s}>
          {minorDb.map((d) => <line key={d} x1="0" x2="2" y1={pct(d, s)} y2={pct(d, s)} stroke="#aaa" />)}
          {DB.map((d) => (
            <g key={d}>
              <line x1="0" x2="4" y1={pct(d, s)} y2={pct(d, s)} stroke="#bbb" />
              <text x="8" y={pct(d, s)} dy="5" fill={c.text}>{d}</text>
            </g>
          ))}
        </g>
      ))}
      <line x1="0" x2="4" y1="50%" y2="50%" stroke="#bbb" />
      <text x="8" y="50%" dy="5" fill={c.text}>-∞</text>
      <text x="8" y="12" fill={c.text}>dB</text>
    </svg>
    <ChannelButton>{name}</ChannelButton>
  </LevelHalf>
);

const Gain = ({ name }: { name: string }) => (
  <Row $h={24} $pad="0 6px 0 5px" $dim>
    <GainLabel>{name}<Bars color="#5a5a5a" /><Knob s={18} off /><Dotted>+0</Dotted></GainLabel>
    <MeterBar $h={17}><MeterPeak /><ClipBoxes /></MeterBar>
  </Row>
);

const FilePanel = () => (
  <Panel h={250} tabs={["文件"]} active={0}>
    <Body>
      <Row $h={19} $gap={11} $pad="0 0 0 1px">
        <Folder /><Folder page /><NewFile /><Insert /><Trash off />
        <Spacer />
        <SearchBox $w={196}><Lens /><SearchInput aria-label="搜索文件" /></SearchBox>
      </Row>
      <Row $h={4} />
      <ListFrame $h={170}>
        <FileTable>
          <colgroup><Col $w={181} /><Col $w={41} /><Col $w={100} /><Col $w={76} /><Col $w={60} /><Col /></colgroup>
          <thead>
            <tr>
              <th><Between>名称<G w={12} h={8}><path d="M0 7 6 1 12 7z" fill="#999" /></G></Between></th>
              <th>状态</th><th>持续时间</th><th>采样率</th><th>声道</th><th>位</th>
            </tr>
          </thead>
          <tbody>
            <tr>
              <td><Between $pad={22}><MiniWave />音频素材 - 1967.mp3 *</Between></td>
              <td />
              <td><Between $pad={10}>2:24.248</Between></td>
              <td><Between $pad={1}>44100 Hz</Between></td>
              <td><Between $pad={2}>立体声</Between></td>
              <td><Between $pad={1}>3</Between></td>
            </tr>
          </tbody>
        </FileTable>
        <HScroll><Tri dir="left" /><HThumb /><Tri dir="right" /></HScroll>
      </ListFrame>
      <Row $h={31} $gap={4} $pad="0 0 0 194px">
        <PushButton $off aria-label="播放"><G w={12} h={12}><path d="M1 1l10 5-10 5z" fill="#707070" /></G></PushButton>
        <PushButton aria-label="循环"><LoopIcon /></PushButton>
        <PushButton aria-label="自动播放"><Speaker /></PushButton>
      </Row>
    </Body>
  </Panel>
);

const EffectsPanel = () => (
  <Panel h={386} tabs={["媒体浏览器", "效果夹", "标记", "属性"]} active={1}>
    <Body>
      <Row $h={18} $gap={5}>
        <span>预设:</span>
        <Dropdown label="预设" value="(默认)" grow />
        <Row $h={18} $gap={9} $pad="0 1px 0 2px"><Save /><Trash /><VRule /><G w={14} h={14}><path d="M7 0l2 5h5l-4 3 2 6-5-4-5 4 2-6-4-3h5z" fill="#6c6c6c" /></G></Row>
      </Row>
      <Row $h={28} $pad="0 0 2px">文件: 音频素材 - 1967.mp3</Row>
      <Rack>
        <Slots>
          {Array.from({ length: 10 }, (_, i) => (
            <Slot key={i}>
              <SlotNumber>{i + 1}</SlotNumber>
              <SmallSquare $w={15} aria-label={`启用效果 ${i + 1}`}><Power /></SmallSquare>
              <SlotArrow aria-label={`选择效果 ${i + 1}`}><Tri dir="right" /></SlotArrow>
            </Slot>
          ))}
        </Slots>
        <VScroll><Tri dir="up" /><VThumb /><Tri dir="down" /></VScroll>
      </Rack>
      <Row $h={3} />
      <Gain name="输入:" />
      <Gain name="输出:" />
      <Row $h={17} $pad="0 10px 0 128px"><DbScale from={-60} to={0} step={6} minor={1} span={60} inset={6} h={17} /></Row>
      <Row $h={26} $gap={8} $pad="0 6px 0 5px" $dim>
        <span>混合:</span><span>干声</span>
        <Range type="range" aria-label="混合" defaultValue={100} />
        <span>湿声</span><Percent><Dotted>100</Dotted> %</Percent>
      </Row>
      <HRule />
      <Row $h={27} $gap={4} $pad="0 8px 0 0">
        <SmallSquare $w={17} aria-label="电源"><Power /></SmallSquare>
        <SmallSquare $w={19} $pressed aria-label="列表"><G w={13} h={10}><path d="M0 2h2v2H0zM0 7h2v2H0zM5 2h8v2H5zM5 7h8v2H5z" fill="#ccc" /></G></SmallSquare>
        <ApplyButton>应用</ApplyButton>
        <Spacer />
        <Row $h={18} $gap={5}><span>处理:</span><Dropdown label="处理" value="仅选区部分" width={76} /></Row>
      </Row>
    </Body>
  </Panel>
);

const HistoryPanel = () => (
  <Panel tabs={["历史", "视频"]} active={0}>
    <Body>
      <ListFrame>
        <HistoryItem><span /><G w={14} h={14}><path d="M1 1h6l2 2v8H1z" stroke="#aaa" strokeWidth="1.500" /><path d="M3 4h4M3 6h4M3 8h4" stroke="#aaa" /><path d="M7 6l5 5H9v3z" fill="#111" stroke="#bbb" strokeWidth=".5" /></G>打开</HistoryItem>
        <HistoryItem $on><G w={10} h={10}><path d="M0 0h5l4 4.500L5 9H0z" fill="#888" stroke="#ddd" /></G><Fx>fx</Fx>自适应降噪</HistoryItem>
      </ListFrame>
      <Row $h={29} $pad="2px 6px 0 0"><span>1 次撤销</span><Spacer /><Trash /></Row>
    </Body>
  </Panel>
);

const EditorPanel = () => (
  <Panel
    tabs={["编辑器", "混音器"]}
    active={0}
    lead={
      <EditorSelect>
        <Select aria-label="编辑器" $w={162} defaultValue="a"><option value="a">编辑器: 音频素材 - 1967.mp3 *</option></Select>
        <Tri dir="down" />
      </EditorSelect>
    }
  >
    <EditorGrid>
      <Overview>
        <svg viewBox={`0 0 ${SPAN} 28`} preserveAspectRatio="none" shapeRendering="crispEdges">
          <path d={bars(leftUp, leftDown, 7, 0.036)} fill="#7c9088" />
          <path d={bars(rightUp, rightDown, 20, 0.04)} fill="#62756c" />
          <path d={`M0 13h${SPAN}v1H0z`} fill="#555" />
        </svg>
        <Handle /><Handle $right /><OverviewKnob />
      </Overview>
      <SideCell $row={1}>
        <G w={18} h={18}><circle cx="9" cy="9" r="4" stroke="#6c6c6c" strokeWidth="1.500" /><path d="M7 9h4M12 12l5 5M8 1l1-1 1 1M1 8L0 9l1 1M17 8l1 1-1 1M8 17l1 1 1-1" stroke="#6c6c6c" strokeWidth="1.500" /></G>
      </SideCell>
      <TimeRuler>
        <RulerSvg shapeRendering="crispEdges">
          <text x="4" y="14" fill="#7fa38f">hms</text>
          {Array.from({ length: 145 }, (_, t) => <line key={t} x1={timeX(t)} x2={timeX(t)} y1={t % 5 ? 20 : 17} y2="24" stroke="#a9c4b4" />)}
          {times.map((t) => <text key={t} x={timeX(t)} dx="1" y="14" textAnchor="middle" fill="#bdd9ca">{stamp(t)}</text>)}
        </RulerSvg>
        <RulerKnob />
        <Playhead width="11" height="14" viewBox="0 0 11 14"><path d="M0 2q5-4 11 0v5L5.500 14 0 7z" fill="#f0b400" /><path d="M3.500 3v3M5.500 3v3M7.500 3v3" stroke="#4a3500" /></Playhead>
      </TimeRuler>
      <SideCell $row={3}>
        <BareButton $pressed aria-label="吸附"><G w={12} h={12}><path d="M3 12V5a3 3 0 0 1 6 0v7" stroke="#c4c4c4" strokeWidth="3" /></G></BareButton>
      </SideCell>
      <Canvas>
        <WaveChannel up={leftUp} down={leftDown} />
        <WaveChannel up={rightUp} down={rightDown} />
        <Fade /><Fade $right />
        <Hud>
          <Grip $h={10} /><span /><Bars color="#e0e0e0" w={16} /><Knob s={20} />
          <span><Amber>+0</Amber> dB</span>
          <Spacer />
          <SmallSquare $w={14} aria-label="固定"><G w={10} h={10}><path d="M5 0l5 5-2 1-1 3-3-3-4 4 3-5-2-2 3-1z" fill="#ddd" /></G></SmallSquare>
        </Hud>
      </Canvas>
      <LevelScale><LevelRuler name="L" /><LevelRuler name="R" /></LevelScale>
      <Splitter><span /><DotStrip /><EndMark><Tri dir="up" /></EndMark></Splitter>
    </EditorGrid>
    <TransportRow>
      <Clock>0:00.000</Clock>
      <Transport>
        {transportIcons.map((b) => <PushButton key={b.name} $off={b.off} aria-label={b.name}><G>{b.art}</G></PushButton>)}
        <Tooltip role="tooltip">播放 (Space)</Tooltip>
        <Overlay $left={-73} $top={24} width="92" height="64"><RedArrow flip /></Overlay>
        <Overlay $left={38} $top={20} width="12" height="20"><path d="M0 0v16l4-3 3 6 3-1-3-6h5z" fill="#fff" stroke="#222" /></Overlay>
      </Transport>
      <ZoomTools>
        {zoomIcons.map((z) => (
          <G key={z.name} w={20} h={20}>
            <g stroke={z.off ? "#606060" : "#b8b8b8"} strokeWidth="1.300"><path d={z.lead} /><circle cx="12" cy="11" r="4.500" /><path d={z.sign} /></g>
          </G>
        ))}
      </ZoomTools>
    </TransportRow>
  </Panel>
);

export default function App() {
  return (
    <Shell>
      <Global />
      <TitleBar>
        <AppBadge>Au</AppBadge>Adobe Audition
        <Caption>
          <CaptionButton aria-label="最小化"><G w={11} h={11}><path d="M0 5.500h10" stroke="#000" /></G></CaptionButton>
          <CaptionButton aria-label="还原"><G w={11} h={11}><path d="M.5 2.500h8v8h-8zM2.500 2.500v-2h8v8h-2" stroke="#000" /></G></CaptionButton>
          <CaptionButton aria-label="关闭"><G w={11} h={11}><path d="M.5.5l10 10M10.500.5l-10 10" stroke="#000" /></G></CaptionButton>
        </Caption>
      </TitleBar>
      <Menu>
        {["文件(F)", "编辑(E)", "多轨混音(M)", "素材(C)", "效果(S)", "收藏夹(R)", "视图(V)", "窗口(W)", "帮助(H)"].map((m) => <MenuItem key={m}>{m}</MenuItem>)}
      </Menu>
      <Toolbar>
        <Grip $h={20} />
        <ModeGroup>
          <ModeButton $on><MiniWave framed />波形</ModeButton>
          <ModeButton><MultiIcon />多轨混音</ModeButton>
        </ModeGroup>
        <Swoosh />
        <IconRow $gap={10}>
          <span />
          <G w={16} h={12}><rect x=".5" y=".5" width="15" height="11" fill="#b3201c" stroke="#ccc" /><path d="M1 8h14v3H1z" fill="#e0501c" /><path d="M1 1h14v2H1z" fill="#6a1020" /><path d="M4 5v6M8 4v7M12 6v5" stroke="#f08030" /></G>
          <G w={16} h={12}><rect x=".5" y=".5" width="15" height="11" fill="#17172c" stroke="#ccc" /><path d="M1 7l2-1 1 3 2-4 1 4 2-5 1 3 2-5 2 6 1-3" stroke="#7a78ff" strokeWidth="1.300" /></G>
          <VRule />
        </IconRow>
        <Row $h={25} $gap={5} $pad="0 0 0 7px">
          {toolIcons.map((t) => <BareButton key={t.name} $pressed={t.on} aria-label={t.name}><G w={17} h={17}>{t.art}</G></BareButton>)}
        </Row>
        <Spacer />
        <Row $h={25} $gap={7}>
          <span>工作区:</span>
          <Dropdown label="工作区" value="默认" width={119} />
          <SearchBox $w={192} $big><Lens /><SearchInput aria-label="搜索帮助" placeholder="搜索帮助" /></SearchBox>
        </Row>
      </Toolbar>
      <Workspace>
        <Column $w={485}>
          <FilePanel />
          <EffectsPanel />
          <HistoryPanel />
        </Column>
        <Column>
          <EditorPanel />
          <Panel h={81} tabs={["电平"]} active={0}>
            <LevelBody>
              <MeterBar $h={36}><MeterPeak /><ClipBoxes /></MeterBar>
              <Row $h={19} $pad="0 0 0 5px"><DbScale from={-60} to={-12} step={3} minor={1} span={78} h={19} /></Row>
            </LevelBody>
          </Panel>
        </Column>
      </Workspace>
      <StatusBar>应用 自适应降噪 完成 用时 4.36 秒<StatusRule /></StatusBar>
      <Overlay $left={54} $bottom={32} width="40" height="62"><RedArrow /></Overlay>
      <Watermark>
        <Tag>TAG</Tag>
        <MarkText><MarkName>电脑技术网</MarkName><MarkUrl>www.tagxp.com</MarkUrl></MarkText>
      </Watermark>
    </Shell>
  );
}
